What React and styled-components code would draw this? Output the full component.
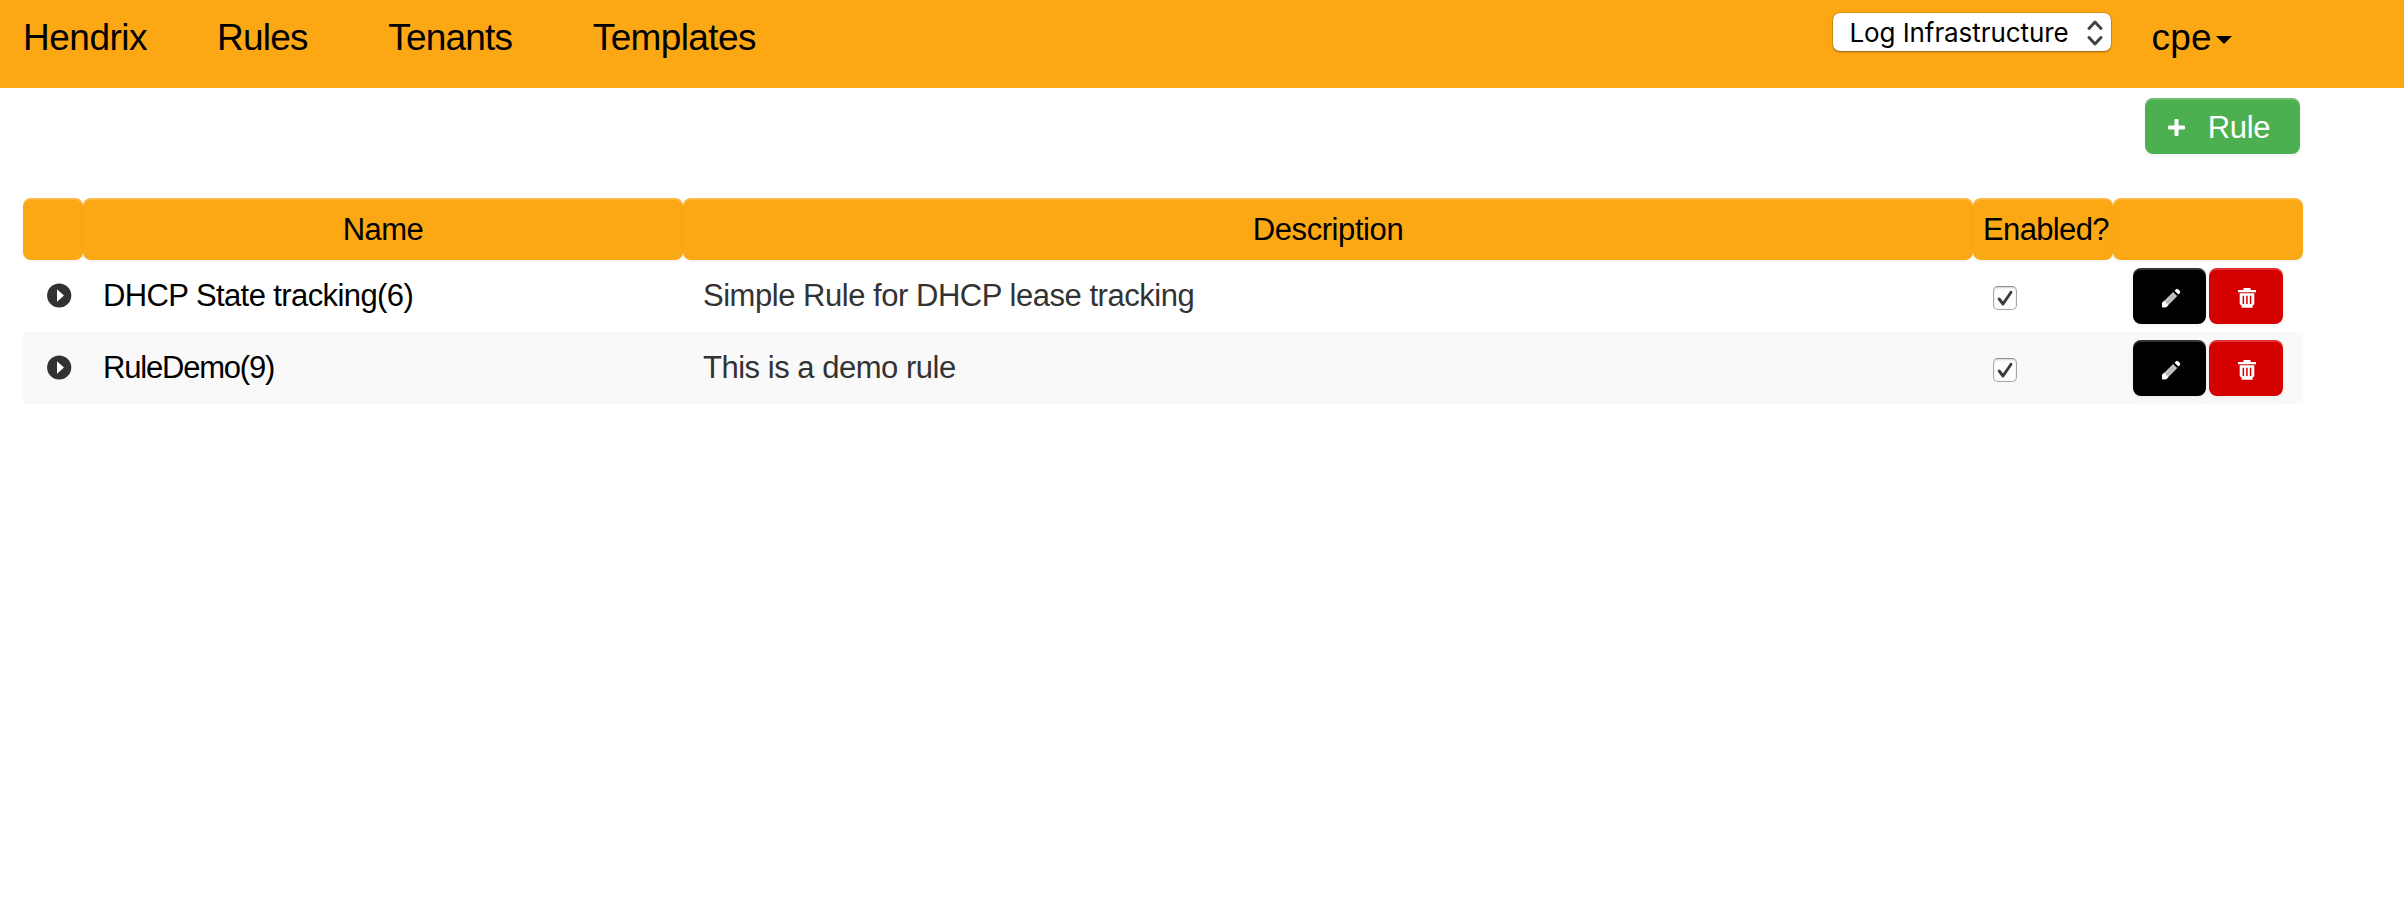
import React, { useState } from "react";
import styled, { createGlobalStyle } from "styled-components";

const GlobalStyle = createGlobalStyle`
  *, *::before, *::after { box-sizing: border-box; }
  body {
    margin: 0;
    background: #fff;
    color: #333;
    font-family: "Liberation Sans", Arial, Helvetica, sans-serif;
    font-size: 31px;
    line-height: 35px;
  }
`;

const orange = "#fca814";

const Text = styled.span`
  display: block;
  white-space: nowrap;
  letter-spacing: ${(p) => p.$tracking || 0}px;
`;

const NavBar = styled.header`
  display: flex;
  align-items: flex-start;
  height: 88px;
  padding: 17px 172px 0 23px;
  background: ${orange};
  color: #000;
  font-size: 37px;
  line-height: 41px;
`;

const NavLinks = styled.nav`
  display: flex;
  gap: 80.5px;
  margin-left: 70px;
`;

const NavLink = styled.a`
  color: inherit;
  text-decoration: none;
`;

const NavRight = styled.div`
  display: flex;
  align-items: flex-start;
  margin-left: auto;
`;

const TenantSelect = styled.button`
  display: flex;
  align-items: center;
  justify-content: space-between;
  width: 278px;
  height: 38px;
  margin: -4px 40px 0 0;
  padding: 1px 8px 0 16px;
  border: 0;
  border-radius: 7px;
  background: #fff;
  box-shadow: 0 0 0 1px rgba(120, 80, 20, 0.22), 0 1px 2px rgba(60, 40, 0, 0.5);
  color: #000;
  font: 26px/30px Inter, sans-serif;
`;

const UserMenu = styled.a`
  display: flex;
  align-items: flex-start;
  gap: 4px;
`;

const Caret = styled.svg`
  width: 16px;
  height: 8px;
  margin-top: 19px;
`;

const Actions = styled.div`
  display: flex;
  justify-content: flex-end;
  height: 110px;
  padding: 10px 104px 0 0;
`;

const Button = styled.button`
  display: flex;
  align-items: center;
  justify-content: center;
  height: 56px;
  padding: 3px 0 0 2px;
  border: 0;
  border-radius: 8px;
  background: ${(p) => p.$color};
  color: #fff;
  font: inherit;
  box-shadow: inset 0 2px 0 rgba(255, 255, 255, 0.2), 0 2px 4px rgba(0, 0, 0, 0.05);
`;

const AddButton = styled(Button)`
  width: 155px;
  gap: 23px;
  padding: 3px 7px 0 0;
`;

const Table = styled.section`
  width: 2280px;
  margin-left: 23px;
`;

const Row = styled.div`
  display: grid;
  grid-template-columns: 60px 600px 1290px 140px 190px;
  height: 72px;
  background: ${(p) => (p.$striped ? "#f9f9f9" : "transparent")};
`;

const HeadRow = styled(Row)`
  height: 62px;
`;

const HeadCell = styled.div`
  display: flex;
  justify-content: ${(p) => (p.$start ? "flex-start" : "center")};
  padding: 14px 0 0 ${(p) => (p.$start ? 10 : 0)}px;
  border-radius: 8px;
  background: ${orange};
  color: #000;
  box-shadow: inset 0 2px 0 rgba(255, 255, 255, 0.2), 0 2px 4px rgba(0, 0, 0, 0.05);
`;

const Cell = styled.div`
  padding: 18px 0 0 20px;
  color: ${(p) => (p.$strong ? "#000" : "#333")};
`;

const ExpandCell = styled.div`
  padding: 23px 0 0 24px;
  line-height: 0;
`;

const CheckCell = styled.div`
  padding: 26px 0 0 20px;
`;

const ButtonCell = styled.div`
  display: flex;
  gap: 3px;
  padding: 8px 0 0 20px;
`;

const EditButton = styled(Button)`
  width: 73px;
`;

const DeleteButton = styled(Button)`
  width: 74px;
`;

const CheckBox = styled.button`
  display: flex;
  width: 24px;
  height: 24px;
  padding: 0;
  border: 1px solid #a6a6a6;
  border-top-color: #8f8f8f;
  border-radius: 5px;
  background: #fff;
  box-shadow: inset 0 1px 2px rgba(0, 0, 0, 0.18);
`;

const ExpandIcon = () => (
  <svg width="25" height="25" viewBox="0 0 25 25">
    <circle cx="12.2" cy="12.5" r="12.1" fill="#333134" />
    <path d="M10 6.2 17 12.5 10 18.8z" fill="#fff" />
  </svg>
);

const PlusIcon = () => (
  <svg width="17" height="17" viewBox="0 0 17 17" fill="#fff">
    <rect x="0" y="6.6" width="17" height="4" rx="1" />
    <rect x="6.5" y="0" width="4" height="17" rx="1" />
  </svg>
);

const PencilIcon = () => (
  <svg width="20" height="20" viewBox="0 0 20 20">
    <path d="M1 19.2V15L12.4 3.7l4.1 4.1L5.2 19.2z" fill="#c4c4c4" />
    <path d="M1 19.2V15l2.3-2.2 4.1 4.1-2.2 2.3z" fill="#fff" />
    <path d="M5 15.2 14.5 5.7" stroke="#8d8d8d" strokeWidth="1" strokeDasharray="1.5 1.5" />
    <path d="M12.6 3.5 16.6 7.5" stroke="#000" strokeWidth="1.2" />
    <path d="M13.6 2.7 15 1.2q1-1 2 0l1.9 1.9q1 1 0 2L17.4 6.5z" fill="#fff" />
  </svg>
);

const TrashIcon = () => (
  <svg width="18" height="20" viewBox="0 0 18 20" fill="#fff">
    <path d="M5.5 0h7v2H18v2.3H0V2h5.5z" />
    <path
      fillRule="evenodd"
      d="M1.7 5.3h14.6v10.6l-1.7 1.8v2.1H3.6v-2.1l-1.9-1.8zM4.6 7.7v8.2h1.5V7.7zM8.2 7.7v8.2h1.5V7.7zM11.8 7.7v8.2h1.5V7.7z"
    />
  </svg>
);

const CheckIcon = () => (
  <svg width="22" height="22" viewBox="0 0 22 22">
    <path d="M5.2 12 9 17 17 5.3" fill="none" stroke="#3b3b3b" strokeWidth="2.9" strokeLinecap="round" strokeLinejoin="round" />
  </svg>
);

const StepperIcon = () => (
  <svg width="16" height="26" viewBox="0 0 16 26" fill="none" stroke="#444" strokeWidth="3" strokeLinecap="round" strokeLinejoin="round">
    <path d="M2 8.5 8 2l6 6.5M2 17.5 8 24l6-6.5" />
  </svg>
);

const links = [
  { label: "Rules", tracking: -0.77 },
  { label: "Tenants", tracking: -0.8 },
  { label: "Templates", tracking: -0.62 },
];

const columns = [
  { id: "expand" },
  { id: "name", label: "Name", tracking: -0.5 },
  { id: "description", label: "Description", tracking: -0.42 },
  { id: "enabled", label: "Enabled?", tracking: -0.64, start: true },
  { id: "actions" },
];

const rules = [
  {
    name: "DHCP State tracking(6)",
    nameTracking: -0.6,
    description: "Simple Rule for DHCP lease tracking",
    descriptionTracking: -0.47,
  },
  {
    name: "RuleDemo(9)",
    nameTracking: -1.2,
    description: "This is a demo rule",
    descriptionTracking: -0.48,
  },
];

function RuleRow({ rule, striped }) {
  const [enabled, setEnabled] = useState(true);
  return (
    <Row $striped={striped}>
      <ExpandCell>
        <ExpandIcon />
      </ExpandCell>
      <Cell $strong>
        <Text $tracking={rule.nameTracking}>{rule.name}</Text>
      </Cell>
      <Cell>
        <Text $tracking={rule.descriptionTracking}>{rule.description}</Text>
      </Cell>
      <CheckCell>
        <CheckBox role="checkbox" aria-checked={enabled} onClick={() => setEnabled(!enabled)}>
          {enabled && <CheckIcon />}
        </CheckBox>
      </CheckCell>
      <ButtonCell>
        <EditButton $color="#000" aria-label="Edit">
          <PencilIcon />
        </EditButton>
        <DeleteButton $color="#d50000" aria-label="Delete">
          <TrashIcon />
        </DeleteButton>
      </ButtonCell>
    </Row>
  );
}

export default function App() {
  return (
    <>
      <GlobalStyle />
      <NavBar>
        <Text $tracking={-0.5}>Hendrix</Text>
        <NavLinks>
          {links.map((link) => (
            <NavLink key={link.label}>
              <Text $tracking={link.tracking}>{link.label}</Text>
            </NavLink>
          ))}
        </NavLinks>
        <NavRight>
          <TenantSelect>
            <Text $tracking={-0.08}>Log Infrastructure</Text>
            <StepperIcon />
          </TenantSelect>
          <UserMenu>
            <Text $tracking={0.3}>cpe</Text>
            <Caret viewBox="0 0 16 8">
              <path d="M0 0h16L8 8z" />
            </Caret>
          </UserMenu>
        </NavRight>
      </NavBar>
      <Actions>
        <AddButton $color="#4caf50">
          <PlusIcon />
          <Text $tracking={-0.34}>Rule</Text>
        </AddButton>
      </Actions>
      <Table>
        <HeadRow>
          {columns.map((column) => (
            <HeadCell key={column.id} $start={column.start}>
              <Text $tracking={column.tracking}>{column.label}</Text>
            </HeadCell>
          ))}
        </HeadRow>
        {rules.map((rule, i) => (
          <RuleRow key={rule.name} rule={rule} striped={i % 2 === 1} />
        ))}
      </Table>
    </>
  );
}
